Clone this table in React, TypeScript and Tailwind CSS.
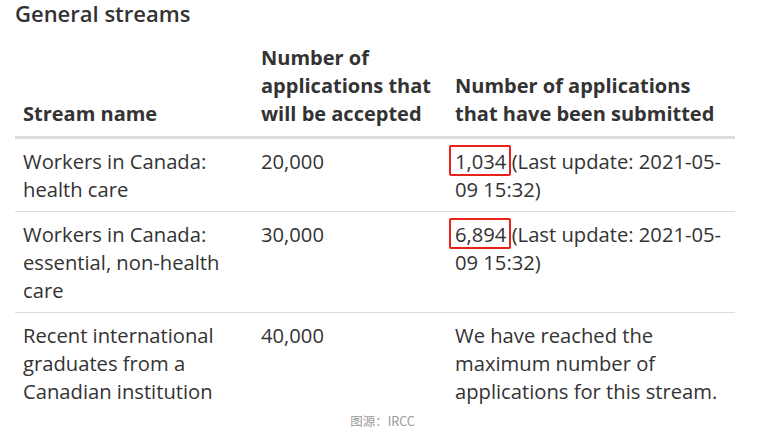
import React from "react";

type Row = {
  name: string;
  cap: string;
  count?: string;
  note?: string;
};

const ROWS: Row[] = [
  { name: "Workers in Canada: health care", cap: "20,000", count: "1,034" },
  { name: "Workers in Canada: essential, non-health care", cap: "30,000", count: "6,894" },
  {
    name: "Recent international graduates from a Canadian institution",
    cap: "40,000",
    note: "We have reached the maximum number of applications for this stream.",
  },
];

function Count({ value }: { value: string }) {
  return (
    <span className="relative">
      {value}
      <span className="pointer-events-none absolute -left-[6px] -right-[5px] -top-[2px] -bottom-[1px] border-2 border-[#e8221b] rounded-[2px]" />
    </span>
  );
}

export default function App() {
  return (
    <div className="w-[771px] h-[447px] bg-white text-[#333] font-['Open_Sans',sans-serif]">
      <div className="px-[15px]">
        <h2 className="text-[22px] leading-[26px] font-semibold">General streams</h2>
        <table className="mt-[10px] w-[720px] border-collapse text-[20.2px] leading-[28px]">
          <thead>
            <tr className="border-b-[3px] border-[#ddd] align-bottom text-left text-[20px]">
              <th className="w-[238px] px-[8px] py-[8px] font-bold">Stream name</th>
              <th className="w-[194px] px-[8px] py-[8px] font-bold">Number of applications that will be accepted</th>
              <th className="px-[8px] py-[8px] font-bold">Number of applications that have been submitted</th>
            </tr>
          </thead>
          <tbody>
            {ROWS.map((r, i) => (
              <tr key={r.name} className={i < ROWS.length - 1 ? "border-b border-[#ddd] align-top" : "align-top"}>
                <td className="px-[8px] py-[8px]">{r.name}</td>
                <td className="px-[8px] py-[8px]">{r.cap}</td>
                <td className="px-[8px] py-[8px]">
                  {r.count ? (
                    <>
                      <Count value={r.count} /> (Last update: 2021-05-09 15:32)
                    </>
                  ) : (
                    r.note
                  )}
                </td>
              </tr>
            ))}
          </tbody>
        </table>
        <p className="w-[735px] text-center text-[12.5px] leading-[16px] text-[#999] font-['Noto_Sans_CJK_SC',sans-serif]">图源：IRCC</p>
      </div>
    </div>
  );
}
